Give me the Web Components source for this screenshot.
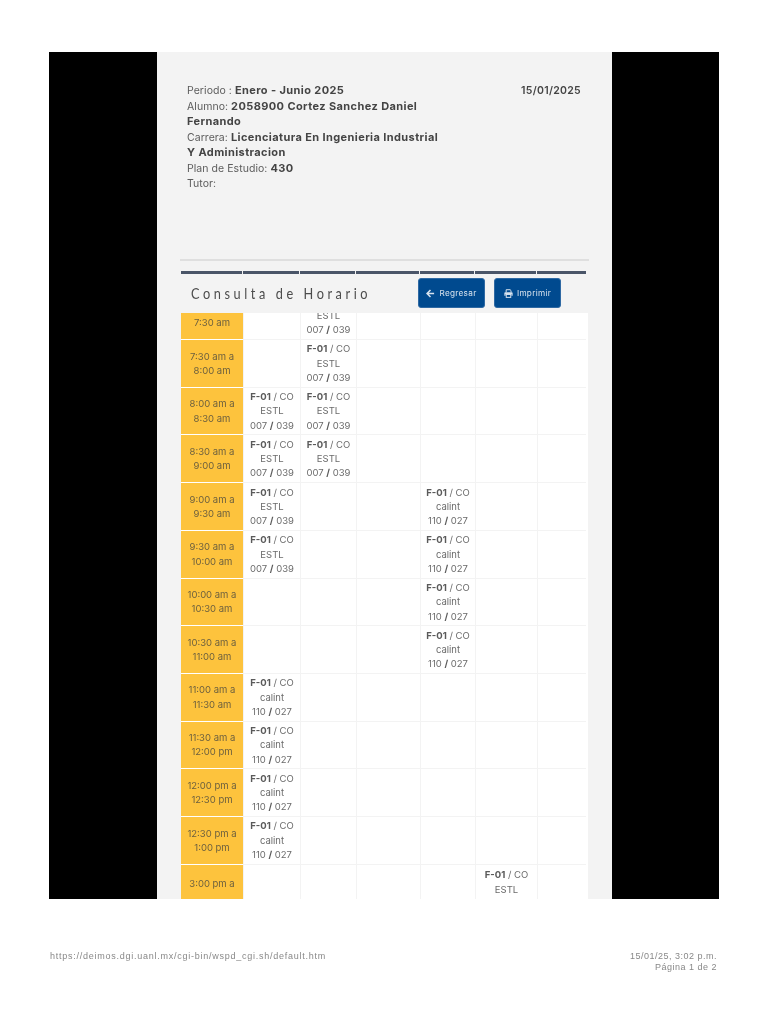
<!DOCTYPE html>
<html lang="es">
<head>
<meta charset="utf-8">
<title>Consulta de Horario</title>
<style>
    html, body { margin: 0; background: #fff; }
    body { font-family: "Inter", "Liberation Sans", sans-serif; }
</style>
</head>
<body>
<print-page>
    <student-info slot="info" date="15/01/2025">
        <div>Periodo : <b>Enero - Junio 2025</b></div>
        <div>Alumno: <b>2058900 Cortez Sanchez Daniel</b></div>
        <div><b>Fernando</b></div>
        <div>Carrera: <b>Licenciatura En Ingenieria Industrial</b></div>
        <div><b>Y Administracion</b></div>
        <div>Plan de Estudio: <b>430</b></div>
        <div>Tutor:</div>
    </student-info>
    <schedule-header slot="header" title="Consulta de Horario"></schedule-header>
    <schedule-table slot="table"></schedule-table>
</print-page>
<print-footer url="https://deimos.dgi.uanl.mx/cgi-bin/wspd_cgi.sh/default.htm" date="15/01/25, 3:02 p.m." page="Página 1 de 2"></print-footer>

<script>
const TABLE_COLUMNS = '62px 57px 56px 64px 55px 62px 49px'

class PrintPage extends HTMLElement {
    constructor() {
        super()
        this.attachShadow({ mode: 'open' })
        this.shadowRoot.innerHTML = `
            <style>
                :host { display: block; padding-top: 52px; }
                .sheet { margin: 0 49px; height: 847px; background: #000; overflow: hidden; }
                .column {
                    margin-left: 108px;
                    width: 455px;
                    height: 100%;
                    box-sizing: border-box;
                    padding: 30px 24px 0;
                    background: #f3f3f3;
                    overflow: hidden;
                    filter: blur(.35px);
                }
                hr { height: 2px; margin: 0 -1px; border: 0; background: #dfdfdf; }
            </style>
            <div class="sheet">
                <div class="column">
                    <slot name="info"></slot>
                    <hr>
                    <slot name="header"></slot>
                    <slot name="table"></slot>
                </div>
            </div>
        `
    }
}

class StudentInfo extends HTMLElement {
    constructor() {
        super()
        this.attachShadow({ mode: 'open' })
        this.shadowRoot.innerHTML = `
            <style>
                :host {
                    display: flex;
                    justify-content: space-between;
                    height: 175.5px;
                    padding: 1px 7px 0 6px;
                    font-size: 10.5px;
                    line-height: 15.55px;
                    color: #5c5c5c;
                }
                .lines { width: 262px; white-space: nowrap; }
                ::slotted(div) { letter-spacing: .05px; }
                .date { font-weight: 600; color: #444; letter-spacing: .3px; }
            </style>
            <div class="lines"><slot></slot></div>
            <div class="date"></div>
        `
    }

    connectedCallback() {
        this.shadowRoot.querySelector('.date').textContent = this.getAttribute('date')
        // bold runs sit in the light dom, so they are sized from here
        this.querySelectorAll('b').forEach(b => {
            b.style.fontSize = '11px'
            b.style.letterSpacing = '.4px'
            b.style.color = '#444'
        })
    }
}

class ScheduleHeader extends HTMLElement {
    constructor() {
        super()
        this.attachShadow({ mode: 'open' })
        this.shadowRoot.innerHTML = `
            <style>
                :host { display: block; margin-top: 10px; }
                .rule { display: grid; grid-template-columns: ${TABLE_COLUMNS}; height: 3px; }
                .rule i { background: #4a5568; border-right: 1px solid #f3f3f3; }
                .rule i:last-child { border-right: 0; }
                .bar { display: flex; align-items: center; height: 39px; padding-left: 10px; }
                h1 {
                    width: 227px;
                    margin: 0;
                    font: 400 15px "Lato", sans-serif;
                    letter-spacing: 4.2px;
                    color: #4c4c4c;
                    white-space: nowrap;
                    transform: scaleX(.85);
                    transform-origin: left center;
                }
                .buttons { display: flex; gap: 9px; }
            </style>
            <div class="rule"><i></i><i></i><i></i><i></i><i></i><i></i><i></i></div>
            <div class="bar">
                <h1></h1>
                <div class="buttons">
                    <action-button icon="back">Regresar</action-button>
                    <action-button icon="print">Imprimir</action-button>
                </div>
            </div>
        `
    }

    connectedCallback() {
        this.shadowRoot.querySelector('h1').textContent = this.getAttribute('title')
    }
}

class ActionButton extends HTMLElement {
    constructor() {
        super()
        this.attachShadow({ mode: 'open' })
    }

    connectedCallback() {
        const icons = {
            back: '<path d="M5 1.2 1.2 5 5 8.8M1.6 5H9" fill="none" stroke="currentColor" stroke-width="1.7"/>',
            print: '<path d="M2.4 3.6V.8h4.4l1 1v1.8" fill="none" stroke="currentColor" stroke-width="1.1"/>'
                + '<path d="M.4 4.4c0-.5.4-.9.9-.9h7.4c.5 0 .9.4.9.9v3H8.2V5.6H1.8v1.8H.4z" fill="currentColor"/>'
                + '<rect x="2.5" y="6.1" width="5" height="3.2" fill="none" stroke="currentColor" stroke-width="1.1"/>'
        }
        this.shadowRoot.innerHTML = `
            <style>
                :host {
                    display: flex;
                    align-items: center;
                    justify-content: center;
                    gap: 4px;
                    width: 67px;
                    height: 30px;
                    box-sizing: border-box;
                    background: #004a8f;
                    border: 1px solid #2f69a3;
                    border-radius: 3px;
                    color: #d8e3ee;
                    font-size: 8.2px;
                    letter-spacing: .3px;
                }
                svg { width: 9px; height: 9px; flex: none; }
            </style>
            <svg viewBox="0 0 10 10">${icons[this.getAttribute('icon')]}</svg>
            <slot></slot>
        `
    }
}

class ScheduleRow extends HTMLElement {
    constructor() {
        super()
        this.attachShadow({ mode: 'open' })
        this.shadowRoot.innerHTML = `
            <style>
                :host {
                    display: grid;
                    grid-template-columns: ${TABLE_COLUMNS};
                    grid-template-rows: minmax(0, 1fr);
                    height: 47.7px;
                    background: #fff;
                    overflow: hidden;
                    font-size: 9.5px;
                    line-height: 14.3px;
                    color: #6b6b6b;
                    text-align: center;
                }
                :host([clip]) { height: 27.6px; }
                :host([clip]) .cell { justify-content: flex-end; padding: 0 0 2px; }
                :host([clip]) .time { justify-content: flex-end; padding: 0 0 9px; }
                :host([cut]) .time { padding: 0 0 7px; }
                :host([cut]) .cell { justify-content: flex-start; padding: 2px 0 0; line-height: 15px; }
                .time {
                    display: flex;
                    flex-direction: column;
                    justify-content: center;
                    padding-top: 1px;
                    background: #fdc33d;
                    border-bottom: 1px solid #fff;
                    color: #6b5f3f;
                    white-space: pre-line;
                }
                .cell {
                    display: flex;
                    flex-direction: column;
                    justify-content: center;
                    padding-top: 1px;
                    border-left: 1px solid #f3f3f3;
                    border-bottom: 1px solid #f3f3f3;
                    white-space: nowrap;
                }
                b { color: #5a5a5a; font-weight: 700; }
            </style>
        `
    }

    connectedCallback() {
        const time = document.createElement('div')
        time.className = 'time'
        time.textContent = this.getAttribute('time')
        this.shadowRoot.appendChild(time)

        const lessons = JSON.parse(this.getAttribute('lessons') || '{}')
        for (let col = 0; col < 6; col++) {
            const cell = document.createElement('div')
            cell.className = 'cell'
            const kind = lessons[col]
            if (kind === 'ESTL' || kind === 'calint') {
                const room = kind === 'ESTL' ? '007 <b>/</b> 039' : '110 <b>/</b> 027'
                cell.innerHTML = `<div><b>F-01</b> / CO</div><div>${kind}</div><div>${room}</div>`
            } else if (kind === 'tail') {
                cell.innerHTML = `<div>ESTL</div><div>007 <b>/</b> 039</div>`
            } else if (kind === 'head') {
                cell.innerHTML = `<div><b>F-01</b> / CO</div><div>ESTL</div>`
            }
            this.shadowRoot.appendChild(cell)
        }
    }
}

class ScheduleTable extends HTMLElement {
    constructor() {
        super()
        this.attachShadow({ mode: 'open' })
        this.shadowRoot.innerHTML = `<style>:host { display: block; }</style>`
    }

    connectedCallback() {
        // first row is cut by the fixed header, last one by the page break
        const rows = [
            ['7:30 am', { 1: 'tail' }, 'clip'],
            ['7:30 am a\n8:00 am', { 1: 'ESTL' }],
            ['8:00 am a\n8:30 am', { 0: 'ESTL', 1: 'ESTL' }],
            ['8:30 am a\n9:00 am', { 0: 'ESTL', 1: 'ESTL' }],
            ['9:00 am a\n9:30 am', { 0: 'ESTL', 3: 'calint' }],
            ['9:30 am a\n10:00 am', { 0: 'ESTL', 3: 'calint' }],
            ['10:00 am a\n10:30 am', { 3: 'calint' }],
            ['10:30 am a\n11:00 am', { 3: 'calint' }],
            ['11:00 am a\n11:30 am', { 0: 'calint' }],
            ['11:30 am a\n12:00 pm', { 0: 'calint' }],
            ['12:00 pm a\n12:30 pm', { 0: 'calint' }],
            ['12:30 pm a\n1:00 pm', { 0: 'calint' }],
            ['3:00 pm a', { 4: 'head' }, 'cut']
        ]
        rows.forEach(([time, lessons, flag]) => {
            const row = document.createElement('schedule-row')
            row.setAttribute('time', time)
            row.setAttribute('lessons', JSON.stringify(lessons))
            if (flag) row.setAttribute(flag, '')
            this.shadowRoot.appendChild(row)
        })
    }
}

class PrintFooter extends HTMLElement {
    constructor() {
        super()
        this.attachShadow({ mode: 'open' })
    }

    connectedCallback() {
        this.shadowRoot.innerHTML = `
            <style>
                :host {
                    display: flex;
                    justify-content: space-between;
                    padding: 52px 51px 0 50px;
                    font: 9px/11px "Liberation Sans", sans-serif;
                    letter-spacing: .75px;
                    color: #888;
                    filter: blur(.3px);
                }
                .right { text-align: right; letter-spacing: .5px; }
            </style>
            <div>${this.getAttribute('url')}</div>
            <div class="right">${this.getAttribute('date')}<br>${this.getAttribute('page')}</div>
        `
    }
}

customElements.define('action-button', ActionButton)
customElements.define('schedule-row', ScheduleRow)
customElements.define('schedule-table', ScheduleTable)
customElements.define('schedule-header', ScheduleHeader)
customElements.define('student-info', StudentInfo)
customElements.define('print-page', PrintPage)
customElements.define('print-footer', PrintFooter)
</script>
</body>
</html>
